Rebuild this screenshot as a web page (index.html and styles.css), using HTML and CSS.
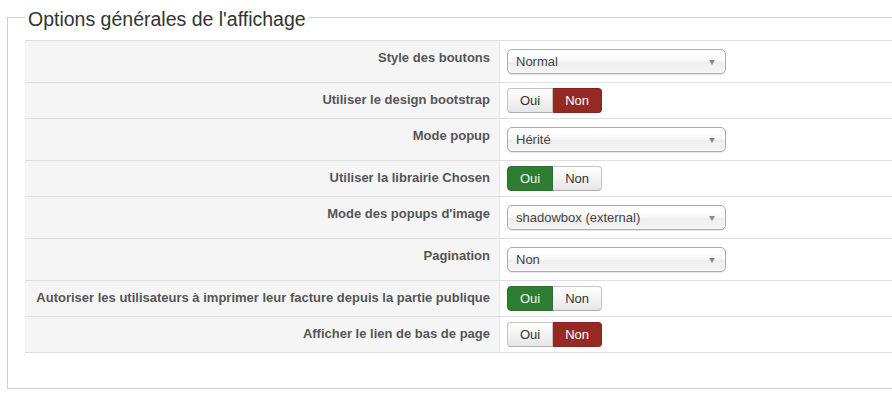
FILE: index.html
```html
<!DOCTYPE html>
<html lang="fr">
<head>
<meta charset="utf-8">
<title>Options générales de l'affichage</title>
<link rel="stylesheet" href="styles.css">
</head>
<body>
<fieldset class="panel">
  <legend class="panel-title">Options générales de l'affichage</legend>
  <div class="form-table">
    <div class="row">
      <div class="label">Style des boutons</div>
      <div class="ctrl ctrl-select"><div class="select">Normal<span class="arrow"></span></div></div>
    </div>
    <div class="row">
      <div class="label">Utiliser le design bootstrap</div>
      <div class="ctrl ctrl-toggle"><div class="toggle"><span class="btn">Oui</span><span class="btn btn-no active">Non</span></div></div>
    </div>
    <div class="row">
      <div class="label">Mode popup</div>
      <div class="ctrl ctrl-select"><div class="select">Hérité<span class="arrow"></span></div></div>
    </div>
    <div class="row">
      <div class="label">Utiliser la librairie Chosen</div>
      <div class="ctrl ctrl-toggle"><div class="toggle"><span class="btn btn-yes active">Oui</span><span class="btn">Non</span></div></div>
    </div>
    <div class="row">
      <div class="label">Mode des popups d'image</div>
      <div class="ctrl ctrl-select"><div class="select">shadowbox (external)<span class="arrow"></span></div></div>
    </div>
    <div class="row">
      <div class="label">Pagination</div>
      <div class="ctrl ctrl-select"><div class="select">Non<span class="arrow"></span></div></div>
    </div>
    <div class="row">
      <div class="label">Autoriser les utilisateurs à imprimer leur facture depuis la partie publique</div>
      <div class="ctrl ctrl-toggle"><div class="toggle"><span class="btn btn-yes active">Oui</span><span class="btn">Non</span></div></div>
    </div>
    <div class="row row-last">
      <div class="label">Afficher le lien de bas de page</div>
      <div class="ctrl ctrl-toggle"><div class="toggle"><span class="btn">Oui</span><span class="btn btn-no active">Non</span></div></div>
    </div>
  </div>
</fieldset>
</body>
</html>
```

FILE: styles.css
```css
body {
  margin: 0;
  background: #fff;
  font-family: "Liberation Sans", Arial, sans-serif;
  font-size: 13px;
  color: #333;
}
.panel {
  box-sizing: border-box;
  width: calc(100% - 7px);
  margin: 3px 0 0 7px;
  padding: 9px 0 35px 17px;
  border: 1px solid #cfcfcf;
  border-right: none;
  min-width: 0;
}
.panel-title {
  padding: 4px 3px 0;
  font-size: 19.5px;
  line-height: 24px;
  font-weight: normal;
  color: #333;
}
.form-table {
  border-bottom: 1px solid #ddd;
}
.row {
  display: grid;
  grid-template-columns: 475px 1fr;
  border-top: 1px solid #ddd;
}
.label {
  background: #f5f5f5;
  border-right: 1px solid #e6e6e6;
  padding: 7px 9px 0 0;
  text-align: right;
  font-weight: bold;
  line-height: 20px;
  color: #555;
}
.ctrl {
  padding-left: 7px;
}
.ctrl-select {
  padding-top: 8px;
  padding-bottom: 8px;
}
.ctrl-toggle {
  padding-top: 5px;
  padding-bottom: 5px;
}
.select {
  position: relative;
  box-sizing: border-box;
  width: 219px;
  height: 25px;
  padding-left: 8px;
  line-height: 23px;
  color: #444;
  border: 1px solid #aaa;
  border-radius: 5px;
  background: linear-gradient(#ffffff 20%, #f6f6f6 50%, #eeeeee 52%, #f4f4f4 100%);
  box-shadow: inset 0 0 3px #fff, 0 1px 1px rgba(0, 0, 0, 0.1);
}
.arrow {
  position: absolute;
  right: 10px;
  top: 10px;
  width: 0;
  height: 0;
  border-left: 3.5px solid transparent;
  border-right: 3.5px solid transparent;
  border-top: 5px solid #8a8a8a;
}
.toggle {
  display: inline-flex;
  height: 25px;
}
.btn {
  box-sizing: border-box;
  height: 25px;
  padding: 0 12px;
  line-height: 23px;
  color: #333;
  border: 1px solid #c4c4c4;
  border-bottom-color: #adadad;
  background: linear-gradient(#ffffff, #e6e6e6);
}
.btn:first-child {
  border-radius: 4px 0 0 4px;
}
.btn:last-child {
  border-radius: 0 4px 4px 0;
  border-left: 0;
}
.btn-yes.active {
  background: #2f7d32;
  border-color: #2a6f2c;
  color: #f4f7e8;
}
.btn-no.active {
  background: #952a25;
  border-color: #862520;
  color: #fff;
}
```
